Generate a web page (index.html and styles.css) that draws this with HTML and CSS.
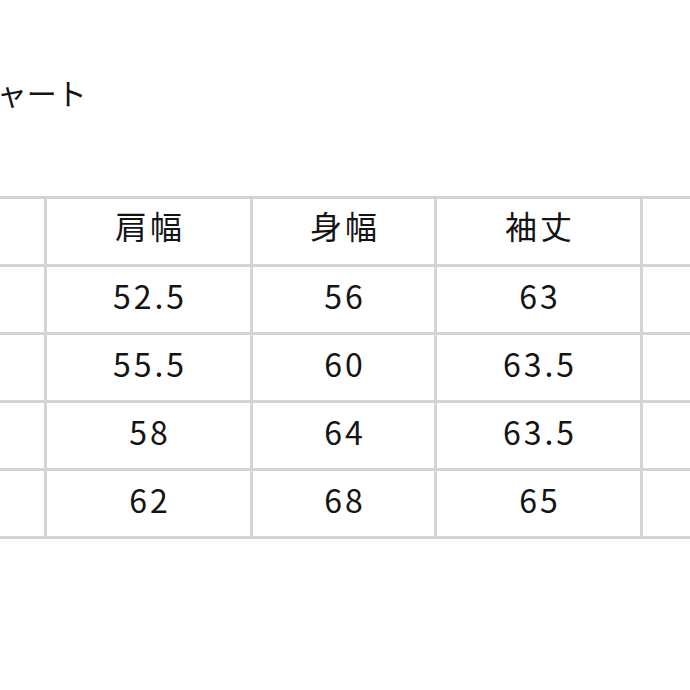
FILE: index.html
```html
<!DOCTYPE html>
<html lang="ja">
<head>
<meta charset="utf-8">
<title>サイズチャート</title>
<link rel="stylesheet" href="styles.css">
</head>
<body>
<div class="sheet">
  <h1 class="title">サイズチャート</h1>
  <div class="chart">
    <div class="cell head"></div>
    <div class="cell head">肩幅</div>
    <div class="cell head">身幅</div>
    <div class="cell head">袖丈</div>
    <div class="cell head"></div>

    <div class="cell"></div>
    <div class="cell">52.5</div>
    <div class="cell">56</div>
    <div class="cell">63</div>
    <div class="cell"></div>

    <div class="cell"></div>
    <div class="cell">55.5</div>
    <div class="cell">60</div>
    <div class="cell">63.5</div>
    <div class="cell"></div>

    <div class="cell"></div>
    <div class="cell">58</div>
    <div class="cell">64</div>
    <div class="cell">63.5</div>
    <div class="cell"></div>

    <div class="cell"></div>
    <div class="cell">62</div>
    <div class="cell">68</div>
    <div class="cell">65</div>
    <div class="cell"></div>
  </div>
</div>
</body>
</html>
```

FILE: styles.css
```css
html, body {
  margin: 0;
  padding: 0;
  background: #ffffff;
  overflow: hidden;
}

body {
  width: 690px;
  height: 690px;
  font-family: "Noto Sans CJK JP", "Noto Sans", sans-serif;
  color: #141414;
}

.sheet {
  margin-left: -162px;
  width: 1100px;
  padding-top: 72px;
}

.title {
  margin: 0 0 0 40px;
  font-size: 30px;
  font-weight: 400;
  line-height: 40px;
  height: 40px;
  letter-spacing: 0;
}

.chart {
  margin-top: 84px;
  display: grid;
  grid-template-columns: 203px 203px 181px 203px 203px;
  grid-auto-rows: 65px;
  gap: 3px;
  padding: 3px;
  background: #d4d4d4;
  width: max-content;
}

.cell {
  background: #ffffff;
  display: flex;
  align-items: center;
  justify-content: center;
  font-size: 32px;
  letter-spacing: 3px;
  text-indent: 3px;
  line-height: 1;
  padding-bottom: 9px;
  box-sizing: border-box;
}

.head {
  padding-bottom: 14px;
}
```
